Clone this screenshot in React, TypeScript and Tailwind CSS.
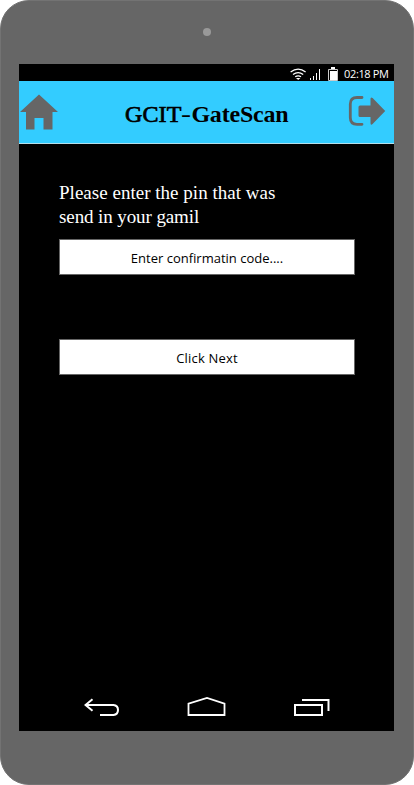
function StatusBar() {
  return (
    <div className="flex h-[17px] w-full items-center bg-black pl-[271px]">
      <svg className="block h-[17px] w-[50px] shrink-0" viewBox="0 0 50 17" fill="none" stroke="#fff">
        <path d="M.6 8Q8.2 2.2 15.6 8M3 10.5Q8.2 6.6 13.2 10.5M5.2 12.8Q8.2 10.8 11 12.8" strokeWidth="1.3" />
        <path d="M6 14h4.4L8.2 16z" fill="#fff" stroke="none" />
        <path d="M20.5 14v2M23.5 12v4M26.5 9v7M29.5 5v11" strokeWidth="1" />
        <path d="M38.5 5.5h9v11h-9z" strokeWidth="1" stroke="#ccc" />
        <path d="M41 3h4v2h-4zM40 7h7v9h-7z" fill="#fff" stroke="none" />
      </svg>
      <span className="ml-[4px] whitespace-nowrap pt-[2px] font-['Open_Sans','Noto_Sans',sans-serif] text-[11px] leading-[15px] tracking-[-0.35px] text-white">
        02:18 PM
      </span>
    </div>
  );
}

function Header() {
  return (
    <header className="flex h-[63px] w-full border-b border-[#b5dfec] bg-[#33ccff]">
      <svg className="block h-[62px] w-[60px] shrink-0" viewBox="0 0 60 62" fill="#666">
        <path d="M20 13.5 39 31h-5.5v17.5H24.5V37h-9v11.5H7V31H1z" />
      </svg>
      <h1 className="ml-[46px] w-[164px] shrink-0 whitespace-nowrap pt-[17px] font-['Liberation_Serif',serif] text-[24px] font-bold leading-[32px] tracking-[-0.2px] text-black">
        <span className="font-normal tracking-[0.1px] [-webkit-text-stroke:0.7px_black]">GCIT</span>
        <span className="inline-block w-[10px] origin-left scale-x-125 font-normal">-</span>
        GateScan
      </h1>
      <svg className="ml-[55px] block h-[62px] w-[50px] shrink-0" viewBox="0 0 50 62" fill="none">
        <path d="M18 16.5H13Q6.3 16.5 6.3 23V36.5Q6.3 43.3 13 43.3H18" stroke="#666" strokeWidth="2.8" strokeLinecap="round" />
        <path d="M16 24.5H26.5V18Q26.5 15.5 28.6 17L41.2 30 28.6 43Q26.5 44.8 26.5 42V36H16Q14.5 36 14.5 34.5V26Q14.5 24.5 16 24.5Z" fill="#666" />
      </svg>
    </header>
  );
}

function NavigationBar() {
  return (
    <nav className="flex h-[49px] w-full items-start pl-[65px] pt-[14px]">
      <svg className="block h-[22px] w-[36px] shrink-0" viewBox="0 0 36 22" fill="none" stroke="#fff" strokeWidth="2">
        <path d="M1 9H29.5Q34 9.5 34 14T29.5 19H16M8.5 3.2 1.5 9l7 5.8" />
      </svg>
      <svg className="ml-[67px] block h-[22px] w-[40px] shrink-0" viewBox="0 0 40 22" fill="none" stroke="#fff" strokeWidth="1.8">
        <path d="M1.5 19V7.7L20 2l17.5 5.7V19z" />
      </svg>
      <svg className="ml-[67px] block h-[22px] w-[38px] shrink-0" viewBox="0 0 38 22" fill="none" stroke="#fff" strokeWidth="2">
        <path d="M1 9h27v10H1zM8 4h26.5v11" />
      </svg>
    </nav>
  );
}

export default function App() {
  return (
    <div className="flex h-[785px] w-[414px] flex-col items-start rounded-[29px] border border-[#737373] bg-[#666] pl-[18px]">
      <div className="flex h-[63px] w-[376px] shrink-0 items-start justify-center pt-[27px]">
        <div className="size-[8px] rounded-full bg-[#999]" />
      </div>
      <div className="flex h-[667px] w-[375px] shrink-0 flex-col bg-black">
        <StatusBar />
        <Header />
        <main className="flex grow flex-col px-[40px] pt-[37px]">
          <p className="whitespace-nowrap font-['Liberation_Serif',serif] text-[19px] leading-[24px] text-white">
            <span className="tracking-[0.02px]">Please enter the pin that was</span>
            <br />
            <span className="tracking-[-0.1px]">send in your gamil</span>
          </p>
          <input
            className="mt-[10px] h-[36px] w-[296px] border border-[#666] bg-white pt-[2px] text-center font-['Open_Sans','Noto_Sans',sans-serif] text-[13px] text-black placeholder:text-black placeholder:opacity-100"
            placeholder="Enter confirmatin code...."
          />
          <button className="mt-[64px] h-[36px] w-[296px] border border-[#666] bg-white pt-[3px] font-['Open_Sans','Noto_Sans',sans-serif] text-[13px] tracking-[0.2px] text-black">
            Click Next
          </button>
        </main>
        <NavigationBar />
      </div>
    </div>
  );
}
